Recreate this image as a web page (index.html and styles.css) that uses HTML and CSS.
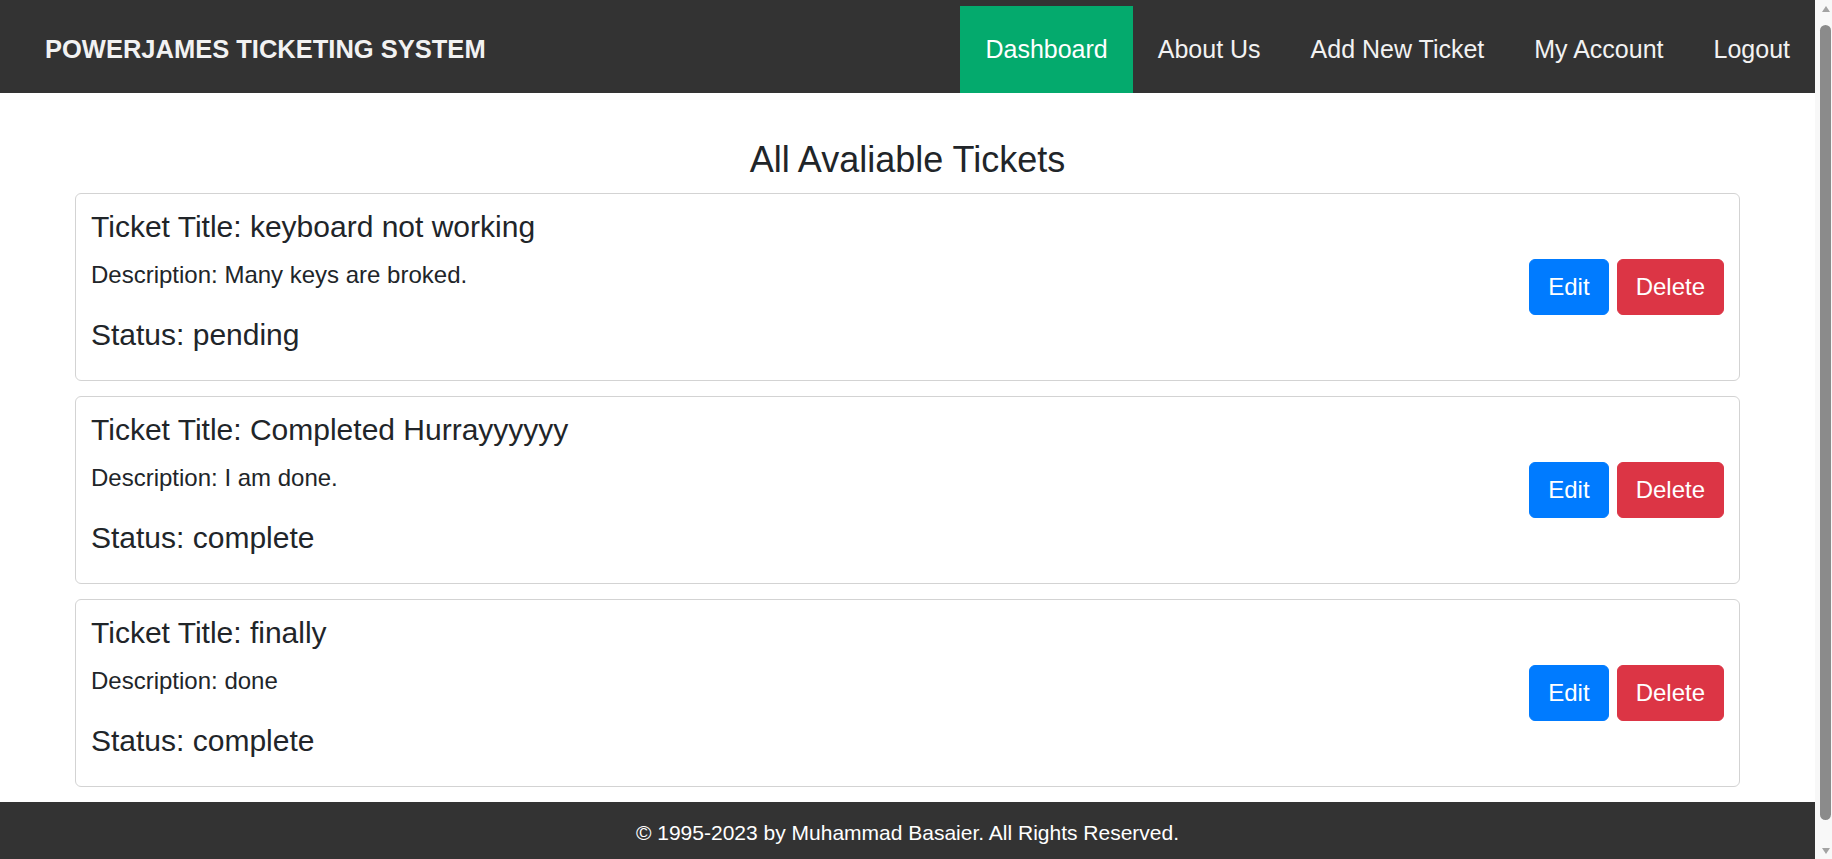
FILE: index.html
```html
<!DOCTYPE html>
<html lang="en">
<head>
<meta charset="utf-8">
<title>PowerJames Ticketing System</title>
<link rel="stylesheet" href="styles.css">
</head>
<body>
<nav class="topnav">
  <div class="brand">POWERJAMES TICKETING SYSTEM</div>
  <div class="nav-links">
    <a class="nav-link active" href="#">Dashboard</a>
    <a class="nav-link" href="#">About Us</a>
    <a class="nav-link" href="#">Add New Ticket</a>
    <a class="nav-link" href="#">My Account</a>
    <a class="nav-link" href="#">Logout</a>
  </div>
</nav>
<main class="content">
  <h2 class="page-title">All Avaliable Tickets</h2>
  <div class="ticket-card">
    <div class="ticket-body">
      <h5 class="ticket-title">Ticket Title: keyboard not working</h5>
      <p class="ticket-desc">Description: Many keys are broked.</p>
      <h5 class="ticket-status">Status: pending</h5>
    </div>
    <div class="ticket-actions">
      <a class="btn btn-edit" href="#">Edit</a>
      <a class="btn btn-delete" href="#">Delete</a>
    </div>
  </div>
  <div class="ticket-card">
    <div class="ticket-body">
      <h5 class="ticket-title">Ticket Title: Completed Hurrayyyyyy</h5>
      <p class="ticket-desc">Description: I am done.</p>
      <h5 class="ticket-status">Status: complete</h5>
    </div>
    <div class="ticket-actions">
      <a class="btn btn-edit" href="#">Edit</a>
      <a class="btn btn-delete" href="#">Delete</a>
    </div>
  </div>
  <div class="ticket-card">
    <div class="ticket-body">
      <h5 class="ticket-title">Ticket Title: finally</h5>
      <p class="ticket-desc">Description: done</p>
      <h5 class="ticket-status">Status: complete</h5>
    </div>
    <div class="ticket-actions">
      <a class="btn btn-edit" href="#">Edit</a>
      <a class="btn btn-delete" href="#">Delete</a>
    </div>
  </div>
</main>
<footer class="footer">© 1995-2023 by Muhammad Basaier. All Rights Reserved.</footer>
<div class="scrollbar" aria-hidden="true">
  <div class="sb-arrow sb-up"></div>
  <div class="sb-track"><div class="sb-thumb"></div></div>
  <div class="sb-arrow sb-down"></div>
</div>
</body>
</html>
```
FILE: styles.css
```css
* {
  box-sizing: border-box;
}

html, body {
  margin: 0;
  padding: 0;
}

body {
  padding-right: 17px;
  font-family: "Liberation Sans", Arial, sans-serif;
  color: #212529;
  background: #fff;
}

.topnav {
  display: flex;
  justify-content: space-between;
  align-items: stretch;
  height: 93px;
  padding-top: 6px;
  background: #333333;
}

.brand {
  display: flex;
  align-items: center;
  padding-left: 45px;
  font-size: 25.5px;
  font-weight: bold;
  color: #f2f2f2;
}

.nav-links {
  display: flex;
  align-items: stretch;
}

.nav-link {
  display: flex;
  align-items: center;
  padding: 0 25px;
  font-size: 25px;
  color: #f2f2f2;
  text-decoration: none;
}

.nav-link.active {
  background: #04aa6d;
  color: #fff;
}

.content {
  padding: 0 75px;
}

.page-title {
  margin: 45px 0 12px;
  font-size: 36px;
  font-weight: normal;
  line-height: 43px;
  text-align: center;
}

.ticket-card {
  display: flex;
  justify-content: space-between;
  align-items: center;
  margin-bottom: 15px;
  border: 1px solid #d3d3d3;
  border-radius: 6px;
  padding: 15px;
  background: #fff;
}

.ticket-title,
.ticket-status {
  margin: 0 0 12px;
  font-size: 30px;
  font-weight: normal;
  line-height: 36px;
}

.ticket-desc {
  margin: 0 0 24px;
  font-size: 24px;
  line-height: 36px;
}

.ticket-actions {
  display: flex;
  gap: 8px;
}

.btn {
  display: inline-block;
  padding: 9px 18px;
  border: 1px solid transparent;
  border-radius: 6px;
  font-size: 24px;
  line-height: 36px;
  color: #fff;
  text-decoration: none;
}

.btn-edit {
  background: #007bff;
  border-color: #007bff;
}

.btn-delete {
  background: #dc3545;
  border-color: #dc3545;
}

.footer {
  padding: 15px;
  background: #333333;
  color: #fff;
  font-size: 21px;
  line-height: 31.5px;
  text-align: center;
}

/* imitation of the browser's vertical scrollbar */
.scrollbar {
  position: fixed;
  top: 0;
  right: 0;
  width: 17px;
  height: 100vh;
  display: flex;
  flex-direction: column;
  background: #f8f8f8;
}

.sb-arrow {
  height: 17px;
  display: flex;
  justify-content: center;
  align-items: center;
  padding-left: 4px;
}

.sb-up::before,
.sb-down::before {
  content: "";
  width: 0;
  height: 0;
  border-left: 4.5px solid transparent;
  border-right: 4.5px solid transparent;
}

.sb-up::before {
  border-bottom: 6px solid #a3a3a3;
}

.sb-down::before {
  border-top: 6px solid #a3a3a3;
}

.sb-track {
  flex: 1;
  padding: 8px 1px 22px 5px;
  display: flex;
}

.sb-thumb {
  flex: 1;
  background: #8b8b8b;
  border-radius: 6px;
}
```
